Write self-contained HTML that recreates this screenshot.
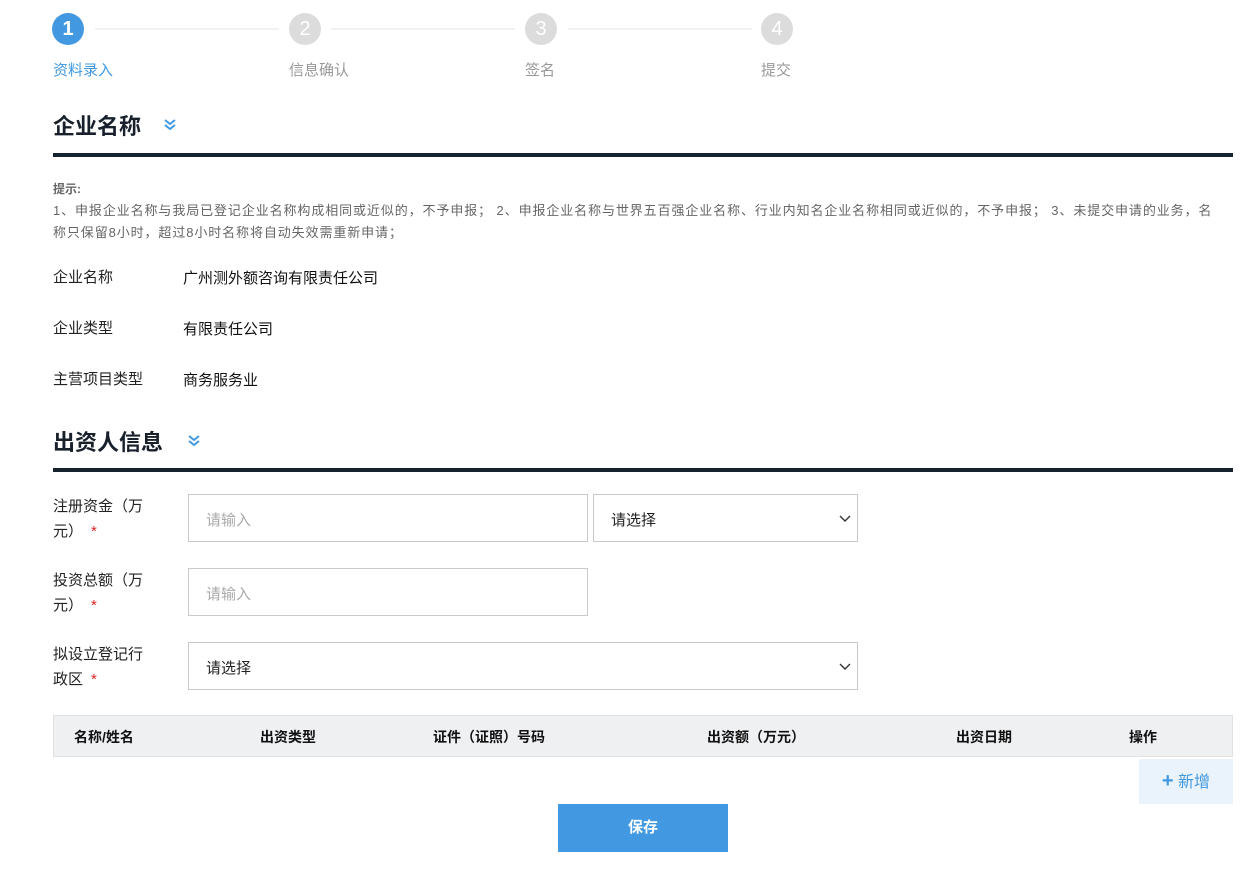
<!DOCTYPE html>
<html><head><meta charset="utf-8"><style>
*{box-sizing:border-box;margin:0;padding:0}
body{width:1249px;height:881px;background:#fff;font-family:"Liberation Sans","Noto Sans CJK SC",sans-serif;position:relative;overflow:hidden;color:#222}
.a{position:absolute}
.step{width:32px;height:32px;border-radius:50%;background:#dcdcdc;color:#fff;font-size:20px;text-align:center;line-height:32px}
.line{height:2px;background:#f1f1f1;top:28px}
.sl{font-size:15px;color:#999;top:59px}
h2{position:absolute;font-size:22px;font-weight:bold;color:#17202b}
.bar{height:4px;background:#17222f;left:53px;width:1180px}
.lbl{font-size:15px;color:#222;left:53px}
.val{font-size:15px;color:#111;left:183px}
.inp{border:1px solid #c9c9c9;height:48px;font-size:15px;color:#aaa;padding:14px 17px}
.sel{color:#222}
.red{color:#d22;margin-left:8px}
.th{font-size:14px;font-weight:bold;top:727px;color:#111}
.arr{position:absolute;right:5px;top:17px}
</style></head><body>
<div class="a step" style="left:52px;top:13px;background:#4299e1;font-weight:bold">1</div>
<div class="a step" style="left:289px;top:13px">2</div>
<div class="a step" style="left:525px;top:13px">3</div>
<div class="a step" style="left:761px;top:13px">4</div>
<div class="a line" style="left:95px;width:184px"></div>
<div class="a line" style="left:331px;width:184px"></div>
<div class="a line" style="left:568px;width:184px"></div>
<div class="a sl" style="left:53px;color:#4299e1">资料录入</div>
<div class="a sl" style="left:289px">信息确认</div>
<div class="a sl" style="left:525px">签名</div>
<div class="a sl" style="left:761px">提交</div>
<h2 style="left:53px;top:109px">企业名称</h2>
<svg class="a" style="left:163px;top:118px" width="14" height="14" viewBox="0 0 14 14"><path d="M2 2l5 4 5-4M2 7l5 4 5-4" fill="none" stroke="#4299e1" stroke-width="2"/></svg>
<div class="a bar" style="top:153px"></div>
<div class="a" style="left:53px;top:180px;font-size:12px;color:#666;font-weight:bold">提示:</div>
<div class="a" style="left:53px;top:200px;width:1180px;font-size:13px;line-height:22px;color:#666;letter-spacing:0.9px;white-space:nowrap">1、申报企业名称与我局已登记企业名称构成相同或近似的，不予申报； 2、申报企业名称与世界五百强企业名称、行业内知名企业名称相同或近似的，不予申报； 3、未提交申请的业务，名<br>称只保留8小时，超过8小时名称将自动失效需重新申请；</div>
<div class="a lbl" style="top:266px">企业名称</div><div class="a val" style="top:267px">广州测外额咨询有限责任公司</div>
<div class="a lbl" style="top:317px">企业类型</div><div class="a val" style="top:318px">有限责任公司</div>
<div class="a lbl" style="top:368px">主营项目类型</div><div class="a val" style="top:369px">商务服务业</div>
<h2 style="left:53px;top:425px">出资人信息</h2>
<svg class="a" style="left:187px;top:434px" width="14" height="14" viewBox="0 0 14 14"><path d="M2 2l5 4 5-4M2 7l5 4 5-4" fill="none" stroke="#4299e1" stroke-width="2"/></svg>
<div class="a bar" style="top:468px"></div>
<div class="a lbl" style="top:494px;line-height:25px;width:100px">注册资金（万元）<span class="red">*</span></div>
<div class="a inp" style="left:188px;top:494px;width:400px">请输入</div>
<div class="a inp sel" style="left:593px;top:494px;width:265px">请选择<svg class="arr" width="14" height="14" viewBox="0 0 14 14"><path d="M2 4l5 5 5-5" fill="none" stroke="#333" stroke-width="1.4"/></svg></div>
<div class="a lbl" style="top:568px;line-height:25px;width:100px">投资总额（万元）<span class="red">*</span></div>
<div class="a inp" style="left:188px;top:568px;width:400px">请输入</div>
<div class="a lbl" style="top:642px;line-height:25px;width:100px">拟设立登记行政区<span class="red">*</span></div>
<div class="a inp sel" style="left:188px;top:642px;width:670px">请选择<svg class="arr" width="14" height="14" viewBox="0 0 14 14"><path d="M2 4l5 5 5-5" fill="none" stroke="#333" stroke-width="1.4"/></svg></div>
<div class="a" style="left:53px;top:715px;width:1180px;height:42px;background:#eff0f2;border:1px solid #e1e1e1"></div>
<div class="a th" style="left:74px">名称/姓名</div>
<div class="a th" style="left:260px">出资类型</div>
<div class="a th" style="left:433px">证件（证照）号码</div>
<div class="a th" style="left:707px">出资额（万元）</div>
<div class="a th" style="left:956px">出资日期</div>
<div class="a th" style="left:1129px">操作</div>
<div class="a" style="left:1139px;top:759px;width:94px;height:45px;background:#eaf3fb;color:#4299e1;font-size:16px;text-align:center;line-height:45px"><b style="font-size:20px">+</b> 新增</div>
<div class="a" style="left:558px;top:804px;width:170px;height:48px;background:#4299e1;color:#fff;font-size:15px;font-weight:bold;text-align:center;line-height:48px">保存</div>
</body></html>
